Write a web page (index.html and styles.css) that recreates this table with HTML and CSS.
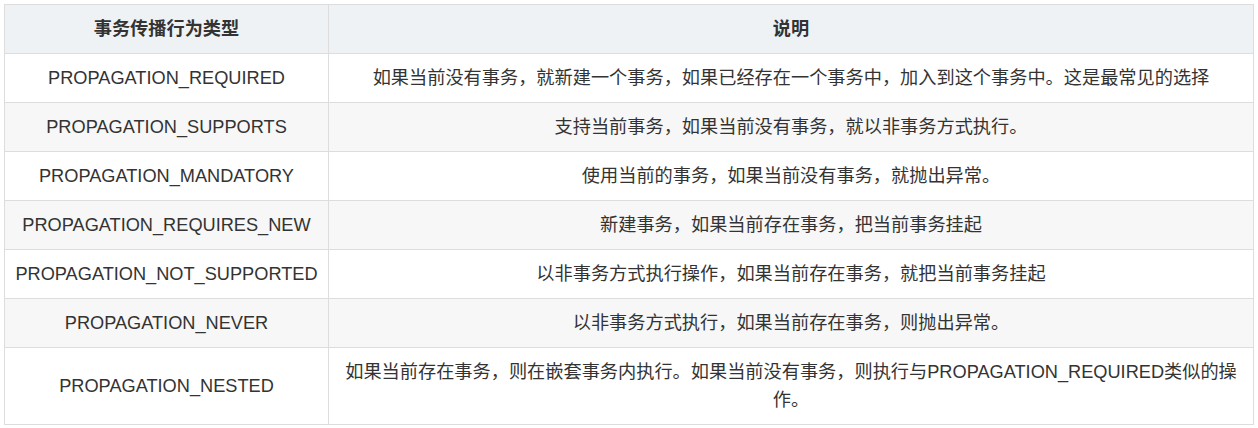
FILE: index.html
```html
<!DOCTYPE html>
<html lang="zh">
<head>
<meta charset="utf-8">
<link rel="stylesheet" href="styles.css">
</head>
<body>
<table class="prop-table">
  <colgroup><col class="col-type"><col class="col-desc"></colgroup>
  <thead>
    <tr><th>事务传播行为类型</th><th>说明</th></tr>
  </thead>
  <tbody>
    <tr><td>PROPAGATION_REQUIRED</td><td>如果当前没有事务，就新建一个事务，如果已经存在一个事务中，加入到这个事务中。这是最常见的选择</td></tr>
    <tr><td>PROPAGATION_SUPPORTS</td><td>支持当前事务，如果当前没有事务，就以非事务方式执行。</td></tr>
    <tr><td>PROPAGATION_MANDATORY</td><td>使用当前的事务，如果当前没有事务，就抛出异常。</td></tr>
    <tr><td>PROPAGATION_REQUIRES_NEW</td><td>新建事务，如果当前存在事务，把当前事务挂起</td></tr>
    <tr><td>PROPAGATION_NOT_SUPPORTED</td><td>以非事务方式执行操作，如果当前存在事务，就把当前事务挂起</td></tr>
    <tr><td>PROPAGATION_NEVER</td><td>以非事务方式执行，如果当前存在事务，则抛出异常。</td></tr>
    <tr><td>PROPAGATION_NESTED</td><td>如果当前存在事务，则在嵌套事务内执行。如果当前没有事务，则执行与PROPAGATION_REQUIRED类似的操作。</td></tr>
  </tbody>
</table>
</body>
</html>
```
FILE: styles.css
```css
html, body {
  margin: 0;
  padding: 0;
  background: #fff;
}
body {
  padding: 4px;
  font-family: "Liberation Sans", Arial, "Noto Sans CJK SC", sans-serif;
  font-size: 18.2px;
  color: #333;
}
.prop-table {
  border-collapse: collapse;
  table-layout: fixed;
  width: 1250px;
}
.col-type { width: 324px; }
.prop-table th,
.prop-table td {
  border: 1px solid #ddd;
  text-align: center;
  padding: 10px 10px;
  line-height: 28px;
  vertical-align: middle;
}
.prop-table th {
  background: #eff2f5;
  font-weight: bold;
  color: #333;
}
.prop-table tbody tr:nth-child(even) {
  background: #f7f7f7;
}
```
